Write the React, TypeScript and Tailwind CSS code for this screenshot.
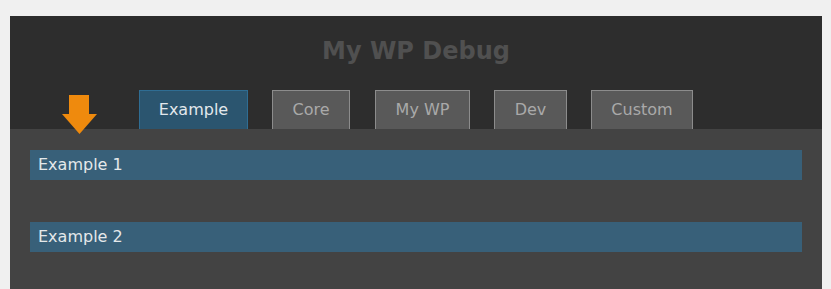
const TABS = [
  { label: 'Example', cls: 'w-[109px]', active: true },
  { label: 'Core', cls: 'w-[78px] ml-6' },
  { label: 'My WP', cls: 'w-[95px] ml-[25px]' },
  { label: 'Dev', cls: 'w-[73px] ml-6' },
  { label: 'Custom', cls: 'w-[102px] ml-6' },
]

function DownArrow() {
  return (
    <svg width="35" height="40" viewBox="0 0 35 40" className="absolute left-[52px] top-[79px]">
      <path d="M7 0 H27 V19 H35 L17.5 39 L0 19 H7 Z" fill="#ef8a0d" />
    </svg>
  )
}

export default function App() {
  return (
    <div className="min-h-screen bg-[#f0f0f0] pt-4 pl-[10px] pr-[9px] font-['DejaVu_Sans',sans-serif]">
      <div className="relative bg-[#2d2d2d]">
        <div className="pt-[19px]">
          <h1 className="text-center text-[24px] leading-[32px] font-bold text-[#505050]">My WP Debug</h1>
          <div className="mt-[23px] ml-[129px] flex">
            {TABS.map(t => (
              <div
                key={t.label}
                className={`${t.cls} h-[39px] flex items-center justify-center border border-b-0 text-[16px] ${
                  t.active
                    ? 'bg-[#2b556f] border-[#2f6d93] text-[#e2e8ec]'
                    : 'bg-[#595959] border-[#8c8c8c] text-[#a9a9a9]'
                }`}
              >
                {t.label}
              </div>
            ))}
          </div>
        </div>
        <div className="bg-[#434343] px-5 pt-[21px] pb-12">
          <div className="h-[30px] bg-[#386079] px-2 flex items-center text-[16px] text-[#e4e8ea]">Example 1</div>
          <div className="mt-[42px] h-[30px] bg-[#386079] px-2 flex items-center text-[16px] text-[#e4e8ea]">Example 2</div>
        </div>
        <DownArrow />
      </div>
    </div>
  )
}
